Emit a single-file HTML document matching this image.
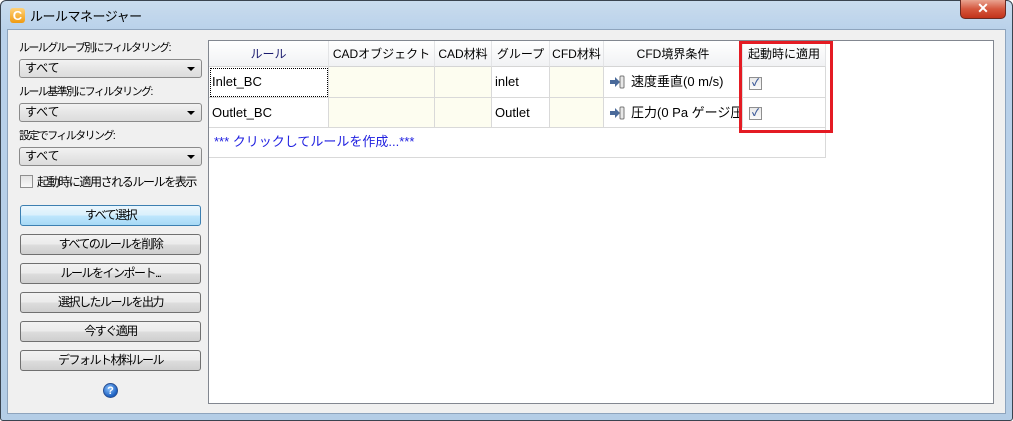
<!DOCTYPE html>
<html><head><meta charset="utf-8"><style>
*{box-sizing:border-box;margin:0;padding:0}
body{width:1013px;height:421px;overflow:hidden;background:#fff;font-family:"Liberation Sans","Noto Sans CJK JP",sans-serif;font-size:12px;color:#000;position:relative}
.frame{position:absolute;left:0;top:0;width:1013px;height:421px;border:1px solid #3a4450;border-radius:6px 6px 3px 3px;background:linear-gradient(180deg,#c9dcee 0,#b9d1ea 30px,#b4cde6 100%)}
.client{position:absolute;left:7px;top:29px;width:999px;height:385px;background:#f0f0f0;border:1px solid #8ea4bd}
.abs{position:absolute}
.title{left:30px;top:6px;font-size:13px;color:#000;letter-spacing:-0.5px}
.close{left:960px;top:0;width:46px;height:19px;border:1px solid #6b2a22;border-top:none;border-radius:0 0 5px 5px;background:linear-gradient(#e9a491,#d5573e 50%,#c2331b);color:#fff;text-align:center;font-size:14px;font-weight:bold;line-height:17px}
.lbl{font-size:11px;left:19px;letter-spacing:-1.6px;white-space:nowrap}
.combo{left:19px;width:183px;height:19px;border:1px solid #8a8a8a;border-radius:3px;background:linear-gradient(#f2f2f2,#e6e6e6 50%,#dcdcdc);padding-left:5px;line-height:17px;font-size:12px}
.combo:after{content:"";position:absolute;right:6px;top:7px;border-left:4px solid transparent;border-right:4px solid transparent;border-top:4px solid #000}
.btn{left:20px;width:181px;height:21px;border:1px solid #707070;border-radius:3px;background:linear-gradient(#f2f2f2,#ebebeb 50%,#dddddd 51%,#cfcfcf);text-align:center;line-height:19px;font-size:12px;letter-spacing:-1.5px}
.grid{left:208px;top:40px;width:786px;height:364px;background:#fff;border:1px solid #828790}
.hdr{top:0;height:26px;background:linear-gradient(#fff,#f1f2f4);border-right:1px solid #e3e4e6;border-bottom:1px solid #d5d5d5;text-align:center;line-height:26px;font-size:12px;color:#000}
.c{height:31px;border-right:1px solid #d9d9d9;border-bottom:1px solid #d9d9d9;line-height:29px;padding-left:3px;font-size:13px}
.y{background:#fdfdf0}
.cb{width:13px;height:13px;border:1px solid #8f8f8f;background:linear-gradient(#e9e9e9,#fafafa);color:#3b5998;font-size:10px;line-height:11px;text-align:center;font-weight:bold}
</style></head><body>
<div class="frame"></div>
<div class="abs" style="left:10px;top:8px;width:15px;height:15px;border-radius:3px;background:linear-gradient(#ffd27a,#f09a10);color:#fff;font-weight:bold;font-size:13px;line-height:15px;text-align:center">C</div>
<div class="abs title">ルールマネージャー</div>
<div class="abs close">✕</div>
<div class="client"></div>

<div class="abs lbl" style="top:39px">ルールグループ別にフィルタリング:</div>
<div class="abs combo" style="top:59px">すべて</div>
<div class="abs lbl" style="top:83px">ルール基準別にフィルタリング:</div>
<div class="abs combo" style="top:103px">すべて</div>
<div class="abs lbl" style="top:127px">設定でフィルタリング:</div>
<div class="abs combo" style="top:147px">すべて</div>
<div class="abs" style="left:20px;top:175px;width:13px;height:13px;border:1px solid #8f8f8f;background:linear-gradient(#e4e4e4,#f8f8f8)"></div>
<div class="abs" style="left:37px;top:173px;font-size:12px;letter-spacing:-1.4px;white-space:nowrap">起動時に適用されるルールを表示</div>

<div class="abs btn" style="top:205px;border-color:#3c7fb1;background:linear-gradient(#eaf6fd,#d9f0fc 50%,#bee6fd 51%,#a7d9f5)">すべて選択</div>
<div class="abs btn" style="top:234px">すべてのルールを削除</div>
<div class="abs btn" style="top:263px">ルールをインポート...</div>
<div class="abs btn" style="top:292px">選択したルールを出力</div>
<div class="abs btn" style="top:321px">今すぐ適用</div>
<div class="abs btn" style="top:350px">デフォルト材料ルール</div>
<div class="abs" style="left:103px;top:383px;width:15px;height:15px;border-radius:50%;background:radial-gradient(circle at 40% 35%,#8cc4ff,#1b5fc0 70%);color:#fff;font-weight:bold;font-size:11px;line-height:15px;text-align:center;border:1px solid #2a4f90">?</div>

<div class="abs grid">
 <div class="abs hdr" style="left:0;width:120px;color:#1a1a6e">ルール</div>
 <div class="abs hdr" style="left:120px;width:106px">CADオブジェクト</div>
 <div class="abs hdr" style="left:226px;width:57px">CAD材料</div>
 <div class="abs hdr" style="left:283px;width:58px">グループ</div>
 <div class="abs hdr" style="left:341px;width:54px">CFD材料</div>
 <div class="abs hdr" style="left:395px;width:139px">CFD境界条件</div>
 <div class="abs hdr" style="left:534px;width:83px">起動時に適用</div>

 <div class="abs c" style="left:0;top:26px;width:120px;outline:1px dotted #000;outline-offset:-2px">Inlet_BC</div>
 <div class="abs c y" style="left:120px;top:26px;width:106px"></div>
 <div class="abs c y" style="left:226px;top:26px;width:57px"></div>
 <div class="abs c" style="left:283px;top:26px;width:58px">inlet</div>
 <div class="abs c y" style="left:341px;top:26px;width:54px"></div>
 <div class="abs c" style="left:395px;top:26px;width:139px;padding-left:27px">速度垂直(0 m/s)</div>
 <div class="abs c" style="left:534px;top:26px;width:83px"></div>

 <div class="abs c" style="left:0;top:57px;width:120px;height:30px">Outlet_BC</div>
 <div class="abs c y" style="left:120px;top:57px;width:106px;height:30px"></div>
 <div class="abs c y" style="left:226px;top:57px;width:57px;height:30px"></div>
 <div class="abs c" style="left:283px;top:57px;width:58px;height:30px">Outlet</div>
 <div class="abs c y" style="left:341px;top:57px;width:54px;height:30px"></div>
 <div class="abs c" style="left:395px;top:57px;width:139px;height:30px;padding-left:27px;white-space:nowrap;overflow:hidden">圧力(0 Pa ゲージ圧)</div>
 <div class="abs c" style="left:534px;top:57px;width:83px;height:30px"></div>

 <div class="abs" style="left:0;top:87px;width:617px;height:30px;border-right:1px solid #d9d9d9;border-bottom:1px solid #d9d9d9;color:#2020e0;font-size:13px;line-height:28px;padding-left:5px">*** クリックしてルールを作成...***</div>

 <svg class="abs" style="left:400px;top:34px" width="16" height="14" viewBox="0 0 16 14"><path d="M1 5h5V2l5 5-5 5V9H1z" fill="#4a6a9a"/><rect x="11" y="1" width="4" height="12" rx="1" fill="#e8e8e8" stroke="#777"/></svg>
 <svg class="abs" style="left:400px;top:65px" width="16" height="14" viewBox="0 0 16 14"><path d="M1 5h5V2l5 5-5 5V9H1z" fill="#4a6a9a"/><rect x="11" y="1" width="4" height="12" rx="1" fill="#e8e8e8" stroke="#777"/></svg>
 <div class="abs cb" style="left:540px;top:36px">✓</div>
 <div class="abs cb" style="left:540px;top:66px">✓</div>
</div>
<div class="abs" style="left:739px;top:41px;width:94px;height:92px;border:3px solid #e41b23"></div>
</body></html>
